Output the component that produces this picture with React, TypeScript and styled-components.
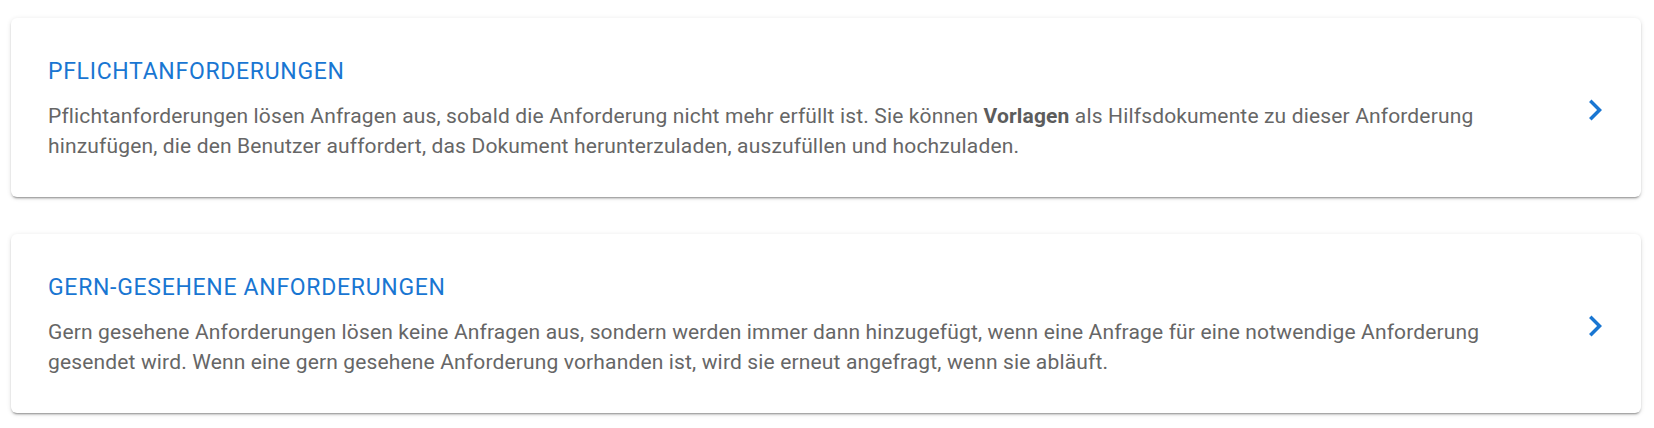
import styled, { createGlobalStyle } from 'styled-components';

const GlobalStyle = createGlobalStyle`
  html, body {
    margin: 0;
    padding: 0;
    background: #ffffff;
  }
  body {
    font-family: Roboto, "Noto Sans", Arial, sans-serif;
  }
`;

const Page = styled.div`
  display: flex;
  flex-direction: column;
  gap: 37px;
  padding: 18px 13px 15px 11px;
`;

const Card = styled.div`
  display: flex;
  align-items: center;
  min-height: 179px;
  box-sizing: border-box;
  padding: 40px 25px 36px 37px;
  background: #ffffff;
  border-radius: 6px;
  box-shadow: 0 3px 1px -2px rgba(0, 0, 0, 0.2), 0 2px 2px 0 rgba(0, 0, 0, 0.14),
    0 1px 5px 0 rgba(0, 0, 0, 0.12);
  cursor: pointer;
`;

const Content = styled.div`
  flex: 1;
  min-width: 0;
`;

const Title = styled.h2`
  margin: 0 0 16px;
  font-size: 23px;
  line-height: 28px;
  font-weight: 400;
  letter-spacing: 0.7px;
  color: #1976d2;
  text-transform: uppercase;
`;

const Description = styled.p`
  margin: 0;
  font-size: 21px;
  line-height: 29.5px;
  letter-spacing: 0.15px;
  color: #666666;

  strong {
    font-weight: 700;
    color: #5c5c5c;
  }
`;

const Chevron = styled.svg`
  flex: none;
  width: 42px;
  height: 42px;
  margin-left: 40px;
  fill: #1976d2;
`;

const ChevronRight = () => (
  <Chevron viewBox="0 0 24 24" aria-hidden="true">
    <path d="M10 6 8.59 7.41 13.17 12l-4.58 4.59L10 18l6-6z" />
  </Chevron>
);

export default function App() {
  return (
    <>
      <GlobalStyle />
      <Page>
        <Card>
          <Content>
            <Title>Pflichtanforderungen</Title>
            <Description>
              Pflichtanforderungen lösen Anfragen aus, sobald die Anforderung nicht mehr erfüllt ist.
              Sie können <strong>Vorlagen</strong> als Hilfsdokumente zu dieser Anforderung
              hinzufügen, die den Benutzer auffordert, das Dokument herunterzuladen, auszufüllen und
              hochzuladen.
            </Description>
          </Content>
          <ChevronRight />
        </Card>
        <Card>
          <Content>
            <Title>Gern-gesehene Anforderungen</Title>
            <Description>
              Gern gesehene Anforderungen lösen keine Anfragen aus, sondern werden immer dann
              hinzugefügt, wenn eine Anfrage für eine notwendige Anforderung gesendet wird. Wenn eine
              gern gesehene Anforderung vorhanden ist, wird sie erneut angefragt, wenn sie abläuft.
            </Description>
          </Content>
          <ChevronRight />
        </Card>
      </Page>
    </>
  );
}
